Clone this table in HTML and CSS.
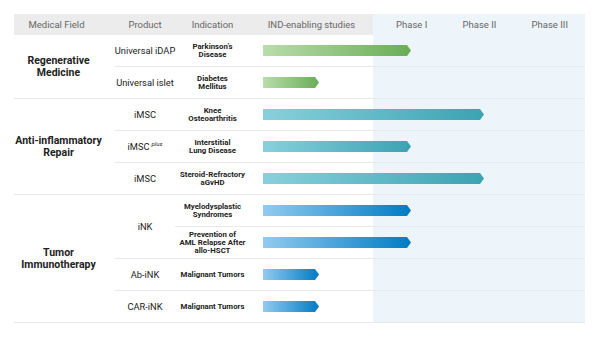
FILE: index.html
```html
<!DOCTYPE html>
<html>
<head>
<meta charset="utf-8">
<link rel="stylesheet" href="styles.css">
</head>
<body>
<div class="pipeline">
  <div class="hd first">Medical Field</div>
  <div class="hd">Product</div>
  <div class="hd">Indication</div>
  <div class="hd">IND-enabling studies</div>
  <div class="hd phases"><span>Phase I</span><span>Phase II</span><span>Phase III</span></div>

  <div class="field span2"><span>Regenerative<br>Medicine</span></div>
  <div class="product"><span>Universal iDAP</span></div>
  <div class="ind"><span>Parkinson’s<br>Disease</span></div>
  <div class="track"><div class="bar green" style="width:148px"></div></div>
  <div class="product"><span>Universal islet</span></div>
  <div class="ind"><span>Diabetes<br>Mellitus</span></div>
  <div class="track"><div class="bar green" style="width:56px"></div></div>

  <div class="field span3"><span>Anti-inflammatory<br>Repair</span></div>
  <div class="product"><span>iMSC</span></div>
  <div class="ind"><span>Knee<br>Osteoarthritis</span></div>
  <div class="track"><div class="bar teal" style="width:221px"></div></div>
  <div class="product"><span>iMSC<sup>plus</sup></span></div>
  <div class="ind"><span>Interstitial<br>Lung Disease</span></div>
  <div class="track"><div class="bar teal" style="width:148px"></div></div>
  <div class="product"><span>iMSC</span></div>
  <div class="ind"><span>Steroid-Refractory<br>aGvHD</span></div>
  <div class="track"><div class="bar teal" style="width:221px"></div></div>

  <div class="field span4"><span>Tumor<br>Immunotherapy</span></div>
  <div class="product span2"><span>iNK</span></div>
  <div class="ind"><span>Myelodysplastic<br>Syndromes</span></div>
  <div class="track"><div class="bar blue" style="width:148px"></div></div>
  <div class="ind"><span>Prevention of<br>AML Relapse After<br>allo-HSCT</span></div>
  <div class="track"><div class="bar blue" style="width:148px"></div></div>
  <div class="product"><span>Ab-iNK</span></div>
  <div class="ind"><span>Malignant Tumors</span></div>
  <div class="track"><div class="bar blue" style="width:56px"></div></div>
  <div class="product"><span>CAR-iNK</span></div>
  <div class="ind"><span>Malignant Tumors</span></div>
  <div class="track"><div class="bar blue" style="width:56px"></div></div>
</div>
</body>
</html>
```
FILE: styles.css
```css
* { box-sizing: border-box; }
html, body { margin: 0; padding: 0; background: #fff; }
body { font-family: Roboto, "Noto Sans", "Liberation Sans", sans-serif; color: #222; }

.pipeline {
  margin: 14px 0 0 14px;
  width: 571px;
  display: grid;
  grid-template-columns: 101px 60px 75px 123px 212px;
  grid-template-rows: 21px;
  grid-auto-rows: 32px;
}

.hd {
  background: #ececec;
  color: #666;
  font-size: 9.5px;
  display: flex;
  align-items: center;
  justify-content: center;
  white-space: nowrap;
}
.hd.first { padding-right: 16px; }
.hd.phases {
  background: #eef5fa;
  justify-content: space-between;
  padding: 0 17px 0 23px;
}

.field, .product, .ind, .track {
  border-bottom: 1px solid #e9e9e9;
  display: flex;
  align-items: center;
  justify-content: center;
  text-align: center;
  white-space: nowrap;
}
.field {
  font-size: 10.5px;
  font-weight: 700;
  line-height: 12px;
  color: #222;
  padding-right: 12px;
}
.span2 { grid-row: span 2; }
.span3 { grid-row: span 3; }
.span4 { grid-row: span 4; }

.product {
  font-size: 9.3px;
  color: #222;
}
.product sup {
  font-size: 6px;
  font-style: italic;
  vertical-align: 4px;
  margin-left: 2px;
  line-height: 0;
}

.ind {
  font-size: 7.8px;
  font-weight: 700;
  line-height: 8px;
  color: #222;
}

.track {
  grid-column: span 2;
  justify-content: flex-start;
  padding-left: 13px;
  background: linear-gradient(to right, #fff 123px, #eef5fa 123px);
}

.bar {
  height: 11px;
  clip-path: polygon(0 0, calc(100% - 4px) 0, 100% 50%, calc(100% - 4px) 100%, 0 100%);
}
.bar.green { background: linear-gradient(to right, #b9ddab, #69ad57); }
.bar.teal { background: linear-gradient(to right, #89d0dc, #3ba3b2); }
.bar.blue { background: linear-gradient(to right, #91cbef, #007bc4); }
```
